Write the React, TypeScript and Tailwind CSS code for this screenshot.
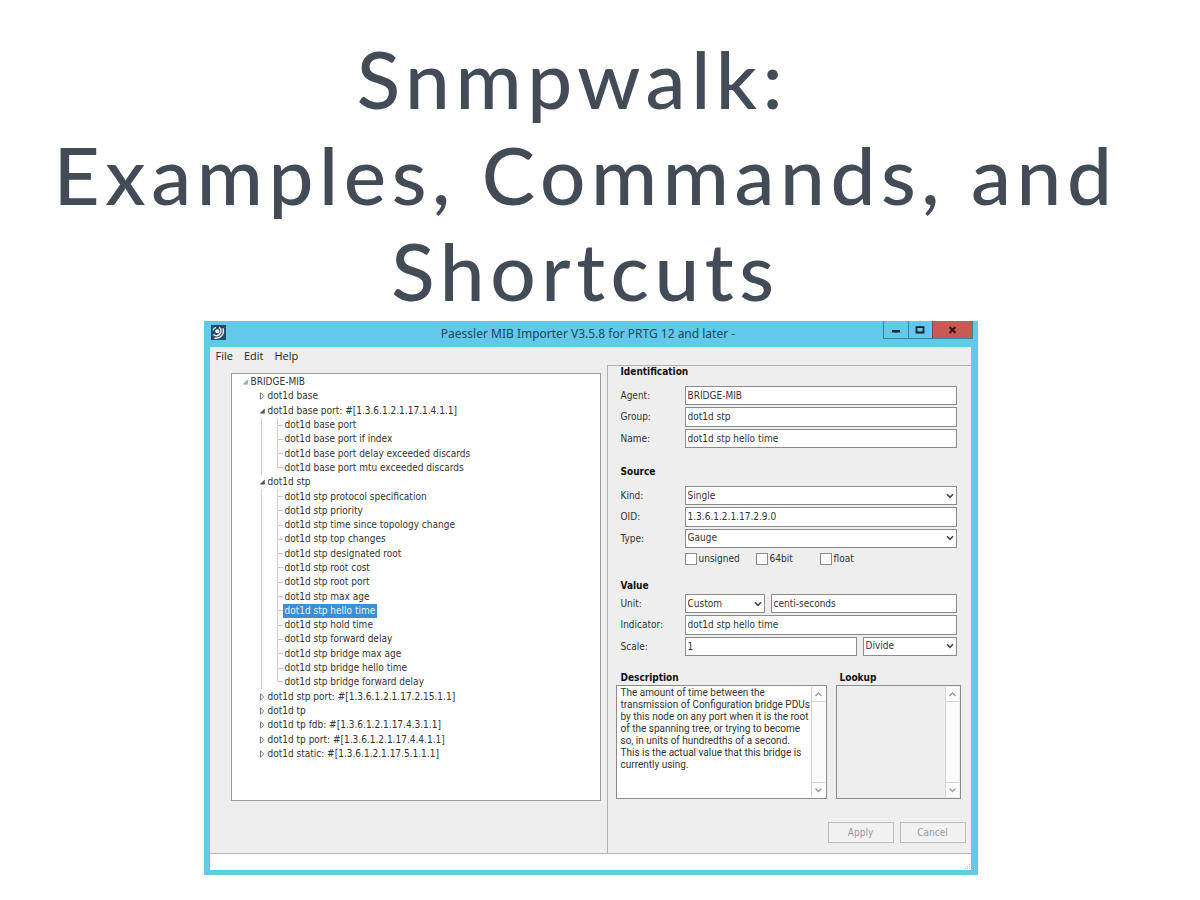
import type { ReactNode } from 'react'

type TreeRow = { level: 0 | 1 | 2; label: string; open?: boolean; selected?: boolean; last?: boolean }

const rows: TreeRow[] = [
  { level: 0, label: 'BRIDGE-MIB', open: true },
  { level: 1, label: 'dot1d base' },
  { level: 1, label: 'dot1d base port: #[1.3.6.1.2.1.17.1.4.1.1]', open: true },
  { level: 2, label: 'dot1d base port' },
  { level: 2, label: 'dot1d base port if index' },
  { level: 2, label: 'dot1d base port delay exceeded discards' },
  { level: 2, label: 'dot1d base port mtu exceeded discards', last: true },
  { level: 1, label: 'dot1d stp', open: true },
  { level: 2, label: 'dot1d stp protocol specification' },
  { level: 2, label: 'dot1d stp priority' },
  { level: 2, label: 'dot1d stp time since topology change' },
  { level: 2, label: 'dot1d stp top changes' },
  { level: 2, label: 'dot1d stp designated root' },
  { level: 2, label: 'dot1d stp root cost' },
  { level: 2, label: 'dot1d stp root port' },
  { level: 2, label: 'dot1d stp max age' },
  { level: 2, label: 'dot1d stp hello time', selected: true },
  { level: 2, label: 'dot1d stp hold time' },
  { level: 2, label: 'dot1d stp forward delay' },
  { level: 2, label: 'dot1d stp bridge max age' },
  { level: 2, label: 'dot1d stp bridge hello time' },
  { level: 2, label: 'dot1d stp bridge forward delay', last: true },
  { level: 1, label: 'dot1d stp port: #[1.3.6.1.2.1.17.2.15.1.1]' },
  { level: 1, label: 'dot1d tp' },
  { level: 1, label: 'dot1d tp fdb: #[1.3.6.1.2.1.17.4.3.1.1]' },
  { level: 1, label: 'dot1d tp port: #[1.3.6.1.2.1.17.4.4.1.1]' },
  { level: 1, label: 'dot1d static: #[1.3.6.1.2.1.17.5.1.1.1]' },
]

const description = `The amount of time between the
transmission of Configuration bridge PDUs
by this node on any port when it is the root
of the spanning tree, or trying to become
so, in units of hundredths of a second.
This is the actual value that this bridge is
currently using.`

const field = 'h-full w-full min-w-0 border border-[#8b8b8b] bg-white px-[2px] outline-none rounded-none'

function Arrow({ open, root }: { open?: boolean; root?: boolean }) {
  return (
    <svg className="mr-[2px] h-[8px] w-[7px] shrink-0" viewBox="0 0 7 8" aria-hidden="true">
      {open ? (
        <path d="M5.5 2V6.2H1.2Z" fill={root ? '#8fb4c8' : '#555'} stroke={root ? '#6f9db5' : '#444'} strokeWidth="0.5" />
      ) : (
        <path d="M1.5 0.8V7.2L4.8 4Z" fill="#fff" stroke="#777" />
      )}
    </svg>
  )
}

function TreeItem({ row }: { row: TreeRow }) {
  if (row.level === 2) {
    return (
      <li className="flex items-center pl-[29px]">
        <span className="h-full w-[16px] shrink-0 border-l border-[#d2d2d2]" />
        <span className={`flex w-[6px] shrink-0 border-l border-[#d2d2d2] ${row.last ? 'h-1/2 items-end self-start' : 'h-full items-center'}`}>
          <span className="w-full border-t border-[#c8c8c8]" />
        </span>
        <span className={`flex h-full items-center px-[2px] ${row.selected ? 'bg-[#3c8fd0] text-[#e4f3fd]' : ''}`}>{row.label}</span>
      </li>
    )
  }
  return (
    <li className={`flex items-center ${row.level === 0 ? 'pl-[10px]' : 'pl-[27px]'}`}>
      <Arrow open={row.open} root={row.level === 0} />
      {row.label}
    </li>
  )
}

function Select({ id, value, label }: { id: string; value: string; label?: string }) {
  return (
    <span className="relative block h-full w-full">
      <select id={id} aria-label={label} defaultValue={value} className={`${field} block appearance-none`}>
        <option>{value}</option>
      </select>
      <svg className="pointer-events-none absolute top-1/2 right-[3px] h-[6px] w-[8px] -translate-y-1/2" viewBox="0 0 8 6" aria-hidden="true">
        <path d="M1 1.2L4 4.4L7 1.2" fill="none" stroke="#444" strokeWidth="1.6" />
      </svg>
    </span>
  )
}

function Row({ id, label, children }: { id: string; label: string; children: ReactNode }) {
  return (
    <div className="flex min-h-0 items-stretch">
      <label htmlFor={id} className="flex w-[64px] shrink-0 items-center pt-px">{label}</label>
      <div className="flex min-w-0 flex-1 gap-[6px]">{children}</div>
    </div>
  )
}

function Check({ label, width }: { label: string; width: string }) {
  return (
    <label className={`flex items-center gap-[2px] ${width}`}>
      <input type="checkbox" className="h-[12px] w-[12px] appearance-none border border-[#8b8b8b] bg-white" />
      {label}
    </label>
  )
}

function ScrollBar() {
  return (
    <div className="flex w-[14px] shrink-0 flex-col justify-between border-l border-[#d5d5d5] bg-[#fbfbfb]" aria-hidden="true">
      <svg className="h-[15px] w-full border-b border-[#d5d5d5]" viewBox="0 0 13 14">
        <path d="M3.5 9L6.5 6L9.5 9" fill="none" stroke="#999" strokeWidth="1.3" />
      </svg>
      <svg className="h-[15px] w-full border-t border-[#d5d5d5]" viewBox="0 0 13 14">
        <path d="M3.5 5.5L6.5 8.5L9.5 5.5" fill="none" stroke="#999" strokeWidth="1.3" />
      </svg>
    </div>
  )
}

export default function App() {
  return (
    <main className="min-h-screen bg-white pt-[30px] pr-[19px] pb-6">
      <h1 className="pr-[10px] pb-[3px] text-center font-[Lato,sans-serif] text-[80px] leading-[96px] font-medium tracking-[0.07em] text-[#434b57]">
        Snmpwalk:&nbsp;<br />Examples, Commands, and<br />Shortcuts
      </h1>

      <section className="mx-auto flex w-full max-w-[774px] flex-col bg-[#63c9ea] pr-[7px] pb-[5px] pl-[6px] font-['DejaVu_Sans_Condensed','DejaVu_Sans',sans-serif] text-[10px] leading-[12px] text-[#333]">
        <header className="flex h-[26px] items-start font-['Noto_Sans',sans-serif]">
          <svg className="mt-[4px] ml-[1px] h-[15px] w-[15px]" viewBox="0 0 15 15" aria-hidden="true">
            <rect width="15" height="15" fill="#2d4866" />
            <circle cx="6.3" cy="6.3" r="2" fill="#fff" />
            <path d="M8.2 2.4A4.6 4.6 0 0 1 4 10.4L2.2 9.6" fill="none" stroke="#e8f2fa" strokeWidth="1.5" />
            <path d="M11.9 3.2A7.3 7.3 0 0 1 3.4 13" fill="none" stroke="#e8f2fa" strokeWidth="1.4" />
            <path d="M5 2.3A4 4 0 0 0 2 5.4" fill="none" stroke="#e8f2fa" strokeWidth="1.2" />
          </svg>
          <h2 className="flex-1 self-center pl-[68px] text-center text-[12px] text-[#17485c]">Paessler MIB Importer V3.5.8 for PRTG 12 and later -</h2>
          <div className="mr-[-2px] flex h-[18px] border border-t-0 border-[#3b7f99]">
            <button aria-label="Minimize" className="flex w-[24px] items-center justify-center">
              <svg className="h-[10px] w-[10px]" viewBox="0 0 10 10"><path d="M1 5H9V7.5H1Z" fill="#10202c" /></svg>
            </button>
            <button aria-label="Maximize" className="flex w-[24px] items-center justify-center border-l border-[#3b7f99]">
              <svg className="h-[8px] w-[10px]" viewBox="0 0 10 8"><path d="M1.5 1.2H8.5V6.5H1.5Z" fill="none" stroke="#10202c" strokeWidth="1.8" /></svg>
            </button>
            <button aria-label="Close" className="flex w-[40px] items-center justify-center border-l border-[#7c4a4a] bg-[#c75a52]">
              <svg className="h-[8px] w-[9px]" viewBox="0 0 9 8"><path d="M1.5 1L7.5 7M7.5 1L1.5 7" stroke="#301515" strokeWidth="2" /></svg>
            </button>
          </div>
        </header>

        <div className="flex flex-col bg-[#eeeeee]">
          <nav className="flex h-[18px] items-center gap-[11px] pl-[6px] font-['Open_Sans',sans-serif] text-[11px] text-[#1c1c1c]">
            <button>File</button>
            <button>Edit</button>
            <button>Help</button>
          </nav>

          <div className="flex">
            <div className="flex min-w-0 flex-1 pt-[8px] pr-[6px] pb-[52px] pl-[21px]">
              <ul className="grid h-[428px] flex-1 auto-rows-fr border border-[#9a9a9a] bg-white pt-px pb-[39px] whitespace-nowrap">
                {rows.map((row) => <TreeItem key={row.label} row={row} />)}
              </ul>
            </div>

            <form className="flex w-[364px] shrink-0 flex-col border-t border-l border-[#b0b0b0] pr-[5px] pl-[8px]">
              <fieldset className="pr-[9px] pl-[5px]">
                <h3 className="h-[12px] font-bold text-[#111]">Identification</h3>
                <div className="mt-[8px] grid h-[62px] grid-rows-3 gap-[2px]">
                  <Row id="agent" label="Agent:"><input id="agent" className={field} defaultValue="BRIDGE-MIB" /></Row>
                  <Row id="group" label="Group:"><input id="group" className={field} defaultValue="dot1d stp" /></Row>
                  <Row id="name" label="Name:"><input id="name" className={field} defaultValue="dot1d stp hello time" /></Row>
                </div>
              </fieldset>

              <fieldset className="mt-[18px] pr-[9px] pl-[5px]">
                <h3 className="h-[12px] font-bold text-[#111]">Source</h3>
                <div className="mt-[8px] grid h-[62px] grid-rows-3 gap-[2px]">
                  <Row id="kind" label="Kind:"><Select id="kind" value="Single" /></Row>
                  <Row id="oid" label="OID:"><input id="oid" className={field} defaultValue="1.3.6.1.2.1.17.2.9.0" /></Row>
                  <Row id="type" label="Type:"><Select id="type" value="Gauge" /></Row>
                </div>
                <div className="mt-[5px] flex pl-[64px]">
                  <Check label="unsigned" width="w-[71px]" />
                  <Check label="64bit" width="w-[64px]" />
                  <Check label="float" width="w-[64px]" />
                </div>
              </fieldset>

              <fieldset className="mt-[15px] pr-[9px] pl-[5px]">
                <h3 className="h-[12px] font-bold text-[#111]">Value</h3>
                <div className="mt-[2px] grid h-[62px] grid-rows-3 gap-[2px]">
                  <Row id="unit" label="Unit:">
                    <div className="w-[80px] shrink-0"><Select id="unit" value="Custom" /></div>
                    <input aria-label="Custom unit" className={field} defaultValue="centi-seconds" />
                  </Row>
                  <Row id="indicator" label="Indicator:"><input id="indicator" className={field} defaultValue="dot1d stp hello time" /></Row>
                  <Row id="scale" label="Scale:">
                    <input id="scale" className={field} defaultValue="1" />
                    <div className="w-[94px] shrink-0"><Select id="scale-mode" label="Scale mode" value="Divide" /></div>
                  </Row>
                </div>
              </fieldset>

              <div className="mt-[16px] flex gap-[9px] pr-[5px]">
                <div className="min-w-0 flex-1">
                  <label htmlFor="description" className="block h-[13px] pl-[5px] font-bold text-[#111]">Description</label>
                  <div className="flex h-[114px] border border-[#8b8b8b] bg-white p-px">
                    <textarea id="description" className="min-w-0 flex-1 resize-none overflow-hidden pl-[3px] font-[Roboto,sans-serif] whitespace-pre outline-none" defaultValue={description} />
                    <ScrollBar />
                  </div>
                </div>
                <div className="w-[125px] shrink-0">
                  <label htmlFor="lookup" className="block h-[13px] pl-[4px] font-bold text-[#111]">Lookup</label>
                  <div className="flex h-[114px] border border-[#8b8b8b] p-px">
                    <textarea id="lookup" disabled className="min-w-0 flex-1 resize-none" />
                    <ScrollBar />
                  </div>
                </div>
              </div>

              <div className="mt-[23px] flex justify-end gap-[6px] text-[#999]">
                <button type="button" className="h-[21px] w-[66px] border border-[#bdbdbd] bg-[#f1f1f1]">Apply</button>
                <button type="button" className="h-[21px] w-[66px] border border-[#bdbdbd] bg-[#f1f1f1]">Cancel</button>
              </div>
            </form>
          </div>

          <footer className="flex h-[17px] items-end justify-end border-t border-[#b8b8b8] bg-white">
            <svg className="h-[8px] w-[8px]" viewBox="0 0 8 8" aria-hidden="true">
              <path d="M6 2h1v1H6zM4 4h1v1H4zM6 4h1v1H6zM2 6h1v1H2zM4 6h1v1H4zM6 6h1v1H6z" fill="#c4c4c4" />
            </svg>
          </footer>
        </div>
      </section>
    </main>
  )
}
